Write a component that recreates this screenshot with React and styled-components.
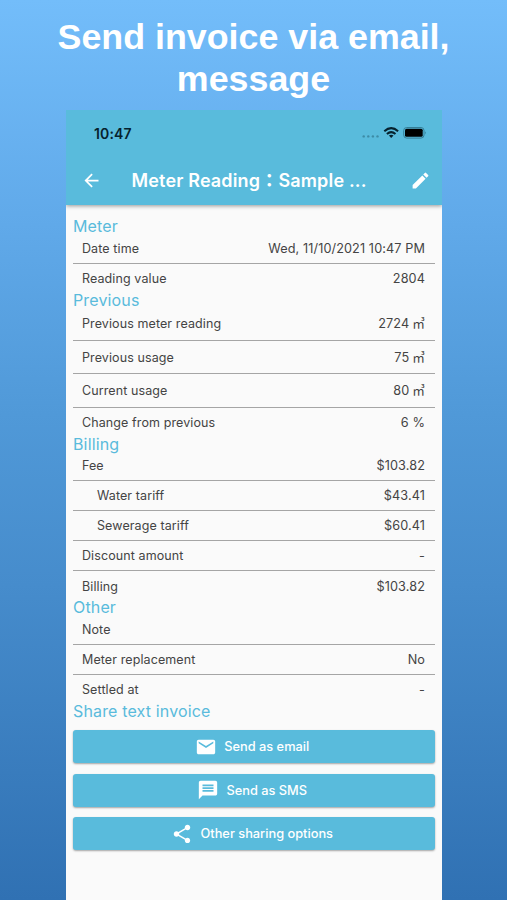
import React from "react";
import styled, {createGlobalStyle} from "styled-components";
import {MdArrowBack, MdEdit, MdEmail, MdMessage, MdShare} from "react-icons/md";

const sections = [
    {
        title: "Meter",
        rows: [
            {label: "Date time", value: "Wed, 11/10/2021 10:47 PM"},
            {label: "Reading value", value: "2804"},
        ],
    },
    {
        title: "Previous",
        rows: [
            {label: "Previous meter reading", value: "2724", cubic: true},
            {label: "Previous usage", value: "75", cubic: true},
            {label: "Current usage", value: "80", cubic: true},
            {label: "Change from previous", value: "6 %"},
        ],
    },
    {
        title: "Billing",
        rows: [
            {label: "Fee", value: "$103.82"},
            {label: "Water tariff", value: "$43.41", nested: true},
            {label: "Sewerage tariff", value: "$60.41", nested: true},
            {label: "Discount amount", value: "-"},
            {label: "Billing", value: "$103.82"},
        ],
    },
    {
        title: "Other",
        rows: [
            {label: "Note", value: ""},
            {label: "Meter replacement", value: "No"},
            {label: "Settled at", value: "-"},
        ],
    },
];

const App = () => {
    return (
        <Page>
            <GlobalStyle/>
            <Headline>Send invoice via email,<br/>message</Headline>
            <Phone>
                <Header>
                    <StatusBar>
                        <Clock>10:47</Clock>
                        <StatusIcons/>
                    </StatusBar>
                    <Toolbar>
                        <MdArrowBack size={21}/>
                        <Title>Meter Reading<Colon>：</Colon>Sample ...</Title>
                        <MdEdit size={21}/>
                    </Toolbar>
                </Header>
                <Content>
                    {sections.map(({title, rows}) => (
                        <section key={title}>
                            <SectionTitle>{title}</SectionTitle>
                            {rows.map((row) => (
                                <Row key={row.label} $nested={row.nested} $tall={row.cubic}>
                                    <span>{row.label}</span>
                                    <Value>{row.value}{row.cubic && <Unit> ㎥</Unit>}</Value>
                                </Row>
                            ))}
                        </section>
                    ))}
                    <SectionTitle>Share text invoice</SectionTitle>
                    <Actions>
                        <ActionButton><MdEmail size={22}/>Send as email</ActionButton>
                        <ActionButton><MdMessage size={22}/>Send as SMS</ActionButton>
                        <ActionButton><MdShare size={22}/>Other sharing options</ActionButton>
                    </Actions>
                </Content>
            </Phone>
        </Page>
    )
}

const StatusIcons = () => (
    <svg width="65" height="14" viewBox="0 0 65 14">
        <g fill="#3d8ba6">
            <circle cx="1.7" cy="10.4" r="1.2"/>
            <circle cx="6.3" cy="10.4" r="1.2"/>
            <circle cx="10.9" cy="10.4" r="1.2"/>
            <circle cx="15.5" cy="10.4" r="1.2"/>
        </g>
        <g fill="none" stroke="#06222e" strokeWidth="2">
            <path d="M22.3 5.2Q29.2 -1 36.1 5.2"/>
            <path d="M24.9 8Q29.2 4.2 33.5 8"/>
        </g>
        <path d="M26.9 9.5Q29.2 7.8 31.5 9.5L29.2 12Z" fill="#06222e"/>
        <rect x="41.7" y="1.5" width="20.3" height="10.6" rx="3" fill="none" stroke="#347e97"/>
        <rect x="43" y="2.8" width="17.7" height="8" rx="1.5" fill="#000"/>
        <path d="M63.2 5.2Q64.8 6.8 63.2 8.4Z" fill="#347e97"/>
    </svg>
)

const GlobalStyle = createGlobalStyle`
  body {
    margin: 0;
  }
`;

const Page = styled.div`
  display: flex;
  flex-direction: column;
  align-items: center;
  height: 900px;
  overflow: hidden;
  background: linear-gradient(#73bdfa, #60a9e9 25%, #5099d8 46%, #468ccc 65%, #3071b3);
  font-family: Inter, "Noto Sans CJK JP", sans-serif;
`;

const Headline = styled.h1`
  flex: none;
  height: 94px;
  margin: 0;
  padding-top: 16px;
  color: #fff;
  font: bold 35.8px/42px "Liberation Sans", Arial, sans-serif;
  text-align: center;
  white-space: nowrap;
`;

const Phone = styled.main`
  display: flex;
  flex: 1;
  flex-direction: column;
  width: 376px;
  margin-left: 1px;
  overflow: hidden;
  background: #fafafa;
`;

const Header = styled.header`
  height: 95px;
  background: #59bbdc;
  box-shadow: 0 1px 4px rgb(0 0 0 / 40%);
`;

const StatusBar = styled.div`
  display: flex;
  align-items: center;
  justify-content: space-between;
  height: 46px;
  padding: 0 15px 0 28px;
`;

const Clock = styled.span`
  color: #06222e;
  font-size: 14px;
  font-weight: 600;
  letter-spacing: 0.15px;
`;

const Toolbar = styled.div`
  display: flex;
  align-items: center;
  height: 49px;
  padding: 0 11px 0 15px;
  color: #fff;
`;

const Title = styled.h2`
  flex: 1;
  margin: 0 0 0 29.5px;
  font-size: 18px;
  font-weight: 600;
  letter-spacing: 0.16px;
  white-space: nowrap;
`;

const Colon = styled.span`
  font-family: "Noto Sans CJK JP", sans-serif;
  line-height: 1;
`;

const Content = styled.div`
  padding: 15.3px 7px 0;
`;

const SectionTitle = styled.h3`
  height: 13.5px;
  margin: 0;
  color: #59bbdc;
  font-size: 16px;
  font-weight: 400;
  line-height: 12.4px;
  letter-spacing: 0.15px;
`;

const Row = styled.div`
  display: flex;
  align-items: center;
  justify-content: space-between;
  box-sizing: border-box;
  height: ${({$tall}) => $tall ? "33.5px" : "30px"};
  padding: 0 10px 0 ${({$nested}) => $nested ? "24px" : "9px"};
  color: #444;
  font-size: 12.5px;
  letter-spacing: 0.1px;

  &:not(:last-child) {
    border-bottom: 1px solid #a5a5a5;
  }
`;

const Value = styled.span`
  font-size: 12.7px;
`;

const Unit = styled.span`
  font-family: "Noto Sans CJK JP", sans-serif;
  line-height: 1;
`;

const Actions = styled.div`
  display: grid;
  gap: 10.5px;
  padding-top: 12px;
`;

const ActionButton = styled.button`
  display: flex;
  align-items: center;
  justify-content: center;
  gap: 7.5px;
  height: 33px;
  padding: 0 4px 0 0;
  border: 0;
  border-radius: 3px;
  color: #fff;
  background: #59bbdc;
  box-shadow: 0 1px 2px rgb(0 0 0 / 35%);
  font: 500 12.8px Inter, sans-serif;
`;

export default App;
